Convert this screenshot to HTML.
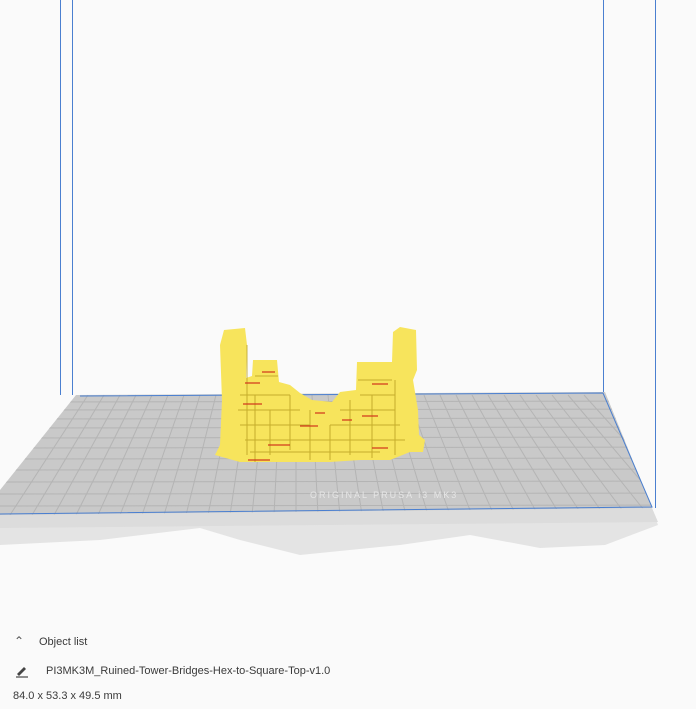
<!DOCTYPE html>
<html><head><style>
html,body{margin:0;padding:0;width:696px;height:709px;background:#fafafa;overflow:hidden;font-family:"Liberation Sans",sans-serif;}
.t{position:absolute;color:#3a3a3a;font-size:11px;}
</style></head><body>
<svg width="696" height="709" style="position:absolute;left:0;top:0">
<defs>
<clipPath id="pl"><polygon points="76,395 605,392 652,508 0,515 0,490"/></clipPath>
</defs>
<!-- base under plate -->
<polygon points="0,515 652,508 658,525 605,545 540,548 470,535 400,545 300,555 240,540 200,528 100,540 0,545" fill="#e4e4e4"/>
<polygon points="0,515 652,508 658,522 0,528" fill="#dcdcdc"/>
<!-- plate -->
<polygon points="76,395 605,392 652,508 0,515 0,490" fill="#c9c9c9"/>
<g clip-path="url(#pl)" stroke="#b4b4b4" stroke-width="1">
<line x1="0" y1="402" x2="696" y2="401"/><line x1="0" y1="410" x2="696" y2="409"/><line x1="0" y1="419" x2="696" y2="418"/><line x1="0" y1="428" x2="696" y2="427"/><line x1="0" y1="438" x2="696" y2="437"/><line x1="0" y1="448" x2="696" y2="447"/><line x1="0" y1="459" x2="696" y2="458"/><line x1="0" y1="470" x2="696" y2="469"/><line x1="0" y1="482" x2="696" y2="481"/><line x1="0" y1="494" x2="696" y2="493"/><line x1="0" y1="506" x2="696" y2="505"/>
<g id="v">
<line x1="88" y1="395" x2="10" y2="515"/><line x1="104" y1="395" x2="32" y2="515"/><line x1="120" y1="395" x2="54" y2="515"/><line x1="136" y1="395" x2="76" y2="515"/><line x1="152" y1="395" x2="98" y2="515"/><line x1="168" y1="395" x2="120" y2="515"/><line x1="184" y1="395" x2="142" y2="515"/><line x1="200" y1="395" x2="164" y2="515"/><line x1="216" y1="395" x2="186" y2="515"/><line x1="232" y1="395" x2="208" y2="515"/><line x1="248" y1="395" x2="230" y2="515"/><line x1="264" y1="395" x2="252" y2="515"/><line x1="280" y1="395" x2="274" y2="515"/><line x1="296" y1="395" x2="296" y2="515"/><line x1="312" y1="395" x2="318" y2="515"/><line x1="328" y1="395" x2="340" y2="515"/><line x1="344" y1="395" x2="362" y2="515"/><line x1="360" y1="395" x2="384" y2="515"/><line x1="376" y1="395" x2="406" y2="515"/><line x1="392" y1="395" x2="428" y2="515"/><line x1="408" y1="395" x2="450" y2="515"/><line x1="424" y1="395" x2="472" y2="515"/><line x1="440" y1="395" x2="494" y2="515"/><line x1="456" y1="395" x2="516" y2="515"/><line x1="472" y1="395" x2="538" y2="515"/><line x1="488" y1="395" x2="560" y2="515"/><line x1="504" y1="395" x2="582" y2="515"/><line x1="520" y1="395" x2="604" y2="515"/><line x1="536" y1="395" x2="626" y2="515"/><line x1="552" y1="395" x2="648" y2="515"/><line x1="568" y1="395" x2="670" y2="515"/><line x1="584" y1="395" x2="692" y2="515"/>
</g>
</g>
<text x="310" y="498" font-size="9" fill="#e6e6e6" letter-spacing="2" font-family="Liberation Sans">ORIGINAL PRUSA i3 MK3</text>
<!-- blue volume lines -->
<g stroke="#4a7fd0" stroke-width="1" fill="none">
<line x1="60.5" y1="0" x2="60.5" y2="395"/>
<line x1="72.5" y1="0" x2="72.5" y2="395"/>
<line x1="603.5" y1="0" x2="603.5" y2="392"/>
<line x1="655.5" y1="0" x2="655.5" y2="508"/>
<polyline points="80,396 603,393 652,507 0,514"/>
</g>
<!-- object -->
<polygon points="215,455 220,445 222,400 220,345 224,330 245,328 247,345 246,378 252,376 253,360 277,360 279,382 290,385 300,393 312,400 332,402 340,392 356,390 357,362 392,362 393,332 400,327 416,330 417,370 413,380 418,410 419,435 425,440 423,452 410,452 390,460 360,460 330,462 290,462 240,462"
 fill="#f7e45c"/>
<g stroke="#b9a020" stroke-width="1" fill="none" opacity="0.8">
<path d="M240 395 H290 M238 410 H300 M240 425 H310 M245 440 H330 M250 452 H380 M340 410 H395 M330 425 H400 M330 440 H405 M360 395 H395 M255 376 H278 M358 380 H392"/>
<path d="M255 395 V462 M270 410 V455 M290 395 V450 M310 410 V460 M330 425 V460 M350 400 V455 M372 395 V458 M395 380 V455 M247 345 V455"/>
</g>
<g stroke="#d23a1c" stroke-width="1.3" fill="none">
<path d="M245 383 H260 M262 372 H275 M243 404 H262 M300 426 H318 M268 445 H290 M342 420 H352 M362 416 H378 M372 384 H388 M372 448 H388 M248 460 H270 M315 413 H325"/>
</g>
</svg>
<div class="t" style="left:14px;top:634px;font-size:12px;color:#555">&#8963;</div>
<div class="t" style="left:39px;top:636px">Object list</div>
<svg width="14" height="14" style="position:absolute;left:15px;top:664px"><path d="M2 10 L9 3 L11 5 L4 12 Z" fill="#444"/><line x1="1" y1="13" x2="13" y2="13" stroke="#444" stroke-width="1.2"/></svg>
<div class="t" style="left:46px;top:665px">PI3MK3M_Ruined-Tower-Bridges-Hex-to-Square-Top-v1.0</div>
<div class="t" style="left:13px;top:690px">84.0 x 53.3 x 49.5 mm</div>
</body></html>
